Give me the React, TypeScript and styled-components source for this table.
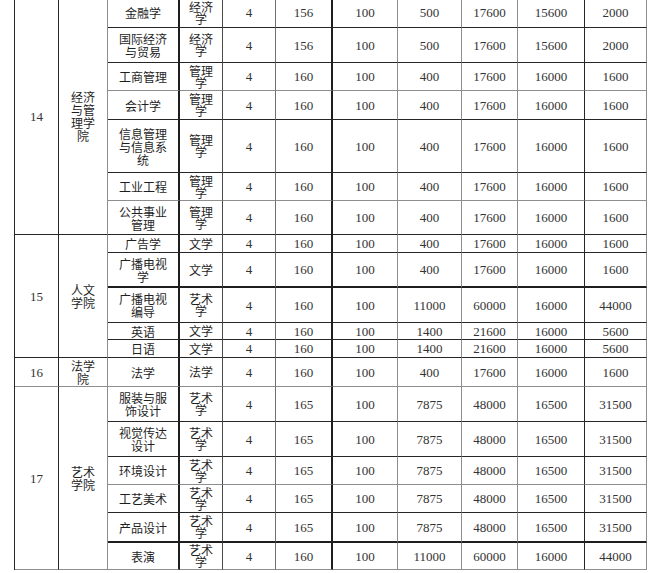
import styled, { createGlobalStyle } from 'styled-components'

const DARK = '1px solid #262626'
const DARK_MID = '1px solid #4a4a4a'
const GREY = '1px solid #8e8e8e'
const GREY_MID = '1px solid #707070'
const THICK = '2px solid #1e1e1e'

// right edge of every column, left to right
const COLUMNS = [
  { width: 44, edge: DARK },
  { width: 49, edge: GREY },
  { width: 72, edge: THICK },
  { width: 43, edge: DARK_MID },
  { width: 53, edge: GREY_MID },
  { width: 57, edge: THICK },
  { width: 65, edge: GREY },
  { width: 64, edge: GREY },
  { width: 56, edge: GREY },
  { width: 67, edge: DARK },
  { width: 62, edge: GREY },
]

type Row = {
  major: string
  kind: string
  values: string[]
  height: number
  line: string
}

type Group = {
  no: string
  name: string
  line: string
  rows: Row[]
}

const ECON = ['4', '156', '100', '500', '17600', '15600', '2000']
const STD = ['4', '160', '100', '400', '17600', '16000', '1600']
const SHOW = ['4', '160', '100', '11000', '60000', '16000', '44000']
const LANG = ['4', '160', '100', '1400', '21600', '16000', '5600']
const ART = ['4', '165', '100', '7875', '48000', '16500', '31500']

const GROUPS: Group[] = [
  {
    no: '14',
    name: '经济与管理学院',
    line: DARK,
    rows: [
      { major: '金融学', kind: '经济学', values: ECON, height: 30, line: DARK },
      { major: '国际经济与贸易', kind: '经济学', values: ECON, height: 35, line: DARK },
      { major: '工商管理', kind: '管理学', values: STD, height: 28, line: GREY },
      { major: '会计学', kind: '管理学', values: STD, height: 29, line: DARK },
      { major: '信息管理与信息系统', kind: '管理学', values: STD, height: 53, line: DARK },
      { major: '工业工程', kind: '管理学', values: STD, height: 28, line: GREY },
      { major: '公共事业管理', kind: '管理学', values: STD, height: 34, line: DARK },
    ],
  },
  {
    no: '15',
    name: '人文学院',
    line: DARK,
    rows: [
      { major: '广告学', kind: '文学', values: STD, height: 18, line: DARK },
      { major: '广播电视学', kind: '文学', values: STD, height: 35, line: THICK },
      { major: '广播电视编导', kind: '艺术学', values: SHOW, height: 35, line: DARK },
      { major: '英语', kind: '文学', values: LANG, height: 17, line: DARK },
      { major: '日语', kind: '文学', values: LANG, height: 18, line: DARK },
    ],
  },
  {
    no: '16',
    name: '法学院',
    line: GREY,
    rows: [{ major: '法学', kind: '法学', values: STD, height: 29, line: GREY }],
  },
  {
    no: '17',
    name: '艺术学院',
    line: GREY,
    rows: [
      { major: '服装与服饰设计', kind: '艺术学', values: ART, height: 35, line: DARK },
      { major: '视觉传达设计', kind: '艺术学', values: ART, height: 35, line: DARK },
      { major: '环境设计', kind: '艺术学', values: ART, height: 28, line: GREY },
      { major: '工艺美术', kind: '艺术学', values: ART, height: 28, line: DARK },
      { major: '产品设计', kind: '艺术学', values: ART, height: 30, line: THICK },
      { major: '表演', kind: '艺术学', values: SHOW, height: 27, line: GREY },
    ],
  },
]

const allRows = GROUPS.flatMap((g) => g.rows)

export default function App() {
  return (
    <>
      <GlobalStyle />
      <Sheet
        $columns={COLUMNS.map((c) => `${c.width}px`).join(' ')}
        $rows={allRows.map((r) => `${r.height}px`).join(' ')}
      >
        {GROUPS.map((group) =>
          group.rows.map((row, i) => (
            <Line key={group.no + row.major} row={row} group={group} first={i === 0} />
          ))
        )}
      </Sheet>
    </>
  )
}

function Line({ row, group, first }: { row: Row; group: Group; first: boolean }) {
  return (
    <>
      {first && (
        <>
          <NumberCell $span={group.rows.length} $right={COLUMNS[0].edge} $bottom={group.line}>
            {group.no}
          </NumberCell>
          <SchoolCell $span={group.rows.length} $right={COLUMNS[1].edge} $bottom={group.line}>
            {group.name}
          </SchoolCell>
        </>
      )}
      <MajorCell $right={COLUMNS[2].edge} $bottom={row.line}>
        {row.major}
      </MajorCell>
      <KindCell $right={COLUMNS[3].edge} $bottom={row.line}>
        {row.kind}
      </KindCell>
      {row.values.map((v, i) => (
        <NumberCell key={i} $right={COLUMNS[i + 4].edge} $bottom={row.line}>
          {v}
        </NumberCell>
      ))}
    </>
  )
}

const GlobalStyle = createGlobalStyle`
  html, body {
    margin: 0;
    background: #ffffff;
    overflow: hidden;
  }
`

const Sheet = styled.div<{ $columns: string; $rows: string }>`
  display: grid;
  grid-template-columns: ${(p) => p.$columns};
  grid-template-rows: ${(p) => p.$rows};
  width: max-content;
  margin: -2px 0 0 14px;
  border-left: 1px solid #262626;
  color: #1f1f1f;
`

const Cell = styled.div<{ $right: string; $bottom: string; $span?: number }>`
  box-sizing: border-box;
  display: flex;
  align-items: center;
  justify-content: center;
  text-align: center;
  border-right: ${(p) => p.$right};
  border-bottom: ${(p) => p.$bottom};
  grid-row: ${(p) => (p.$span ? `span ${p.$span}` : 'auto')};
  min-width: 0;
  min-height: 0;
`

const NumberCell = styled(Cell)`
  font-family: 'Liberation Serif', 'Times New Roman', serif;
  font-size: 13px;
  line-height: 13px;
  color: #333333;
`

const ChineseCell = styled(Cell)`
  font-family: 'Noto Sans CJK SC', sans-serif;
  font-size: 12px;
  line-height: 13px;
`

const SchoolCell = styled(ChineseCell)`
  padding: 0 10px;
`

const MajorCell = styled(ChineseCell)`
  padding: 0 10px;
`

const KindCell = styled(ChineseCell)`
  padding: 0 4px;
  line-height: 12px;
`
